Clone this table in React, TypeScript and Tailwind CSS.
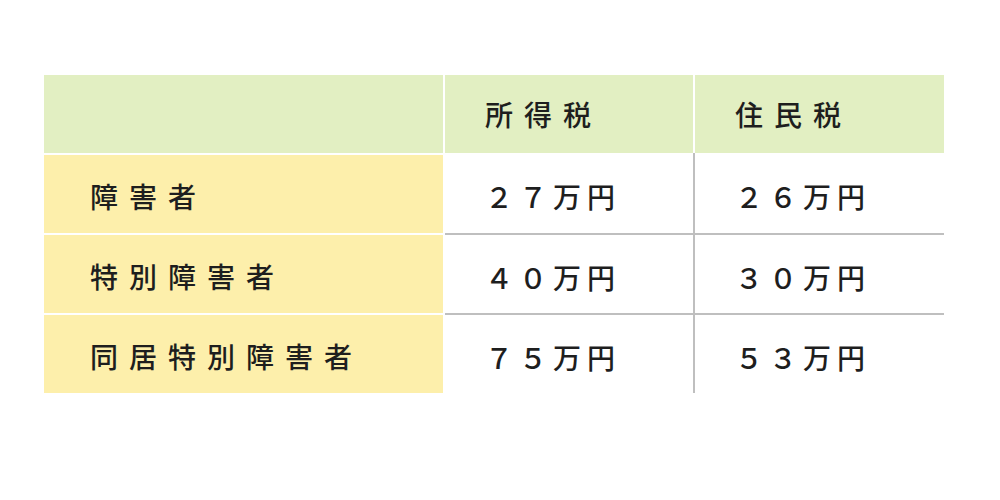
const rows = [
	{ label: "障害者", income: "２７万円", resident: "２６万円" },
	{ label: "特別障害者", income: "４０万円", resident: "３０万円" },
	{ label: "同居特別障害者", income: "７５万円", resident: "５３万円" },
];

export default function App() {
	return (
		<div
			className="w-[1000px] h-[500px] bg-white pt-[75px] pl-[44px] text-[#1e1e1e] font-medium"
			style={{ fontFamily: '"Noto Sans CJK JP", "Noto Sans", sans-serif' }}
		>
			<div className="w-[900px] flex flex-col">
				<div className="flex h-[78px]">
					<div className="w-[399px] bg-[#e2efc2]" />
					<div className="w-[2px]" />
					<div className="w-[248px] bg-[#e2efc2] flex items-center pl-[40px] text-[28px] tracking-[11px]">
						所得税
					</div>
					<div className="w-[2px]" />
					<div className="flex-1 bg-[#e2efc2] flex items-center pl-[40px] text-[28px] tracking-[11px]">
						住民税
					</div>
				</div>
				{rows.map((row, i) => (
					<div key={row.label} className="flex">
						<div className="w-[399px] mt-[2px] h-[78px] bg-[#fdefab] flex items-center pl-[46px] pt-[3px] text-[28px] tracking-[11px]">
							{row.label}
						</div>
						<div className="w-[2px]" />
						<div
							className={`w-[248px] h-[80px] flex items-center pl-[40px] pt-[5px] text-[28px] tracking-[6px] ${i > 0 ? "border-t-2 border-[#bfbfbf]" : ""}`}
						>
							{row.income}
						</div>
						<div className="w-[2px] bg-[#bfbfbf]" />
						<div
							className={`flex-1 h-[80px] flex items-center pl-[40px] pt-[5px] text-[28px] tracking-[6px] ${i > 0 ? "border-t-2 border-[#bfbfbf]" : ""}`}
						>
							{row.resident}
						</div>
					</div>
				))}
			</div>
		</div>
	);
}
